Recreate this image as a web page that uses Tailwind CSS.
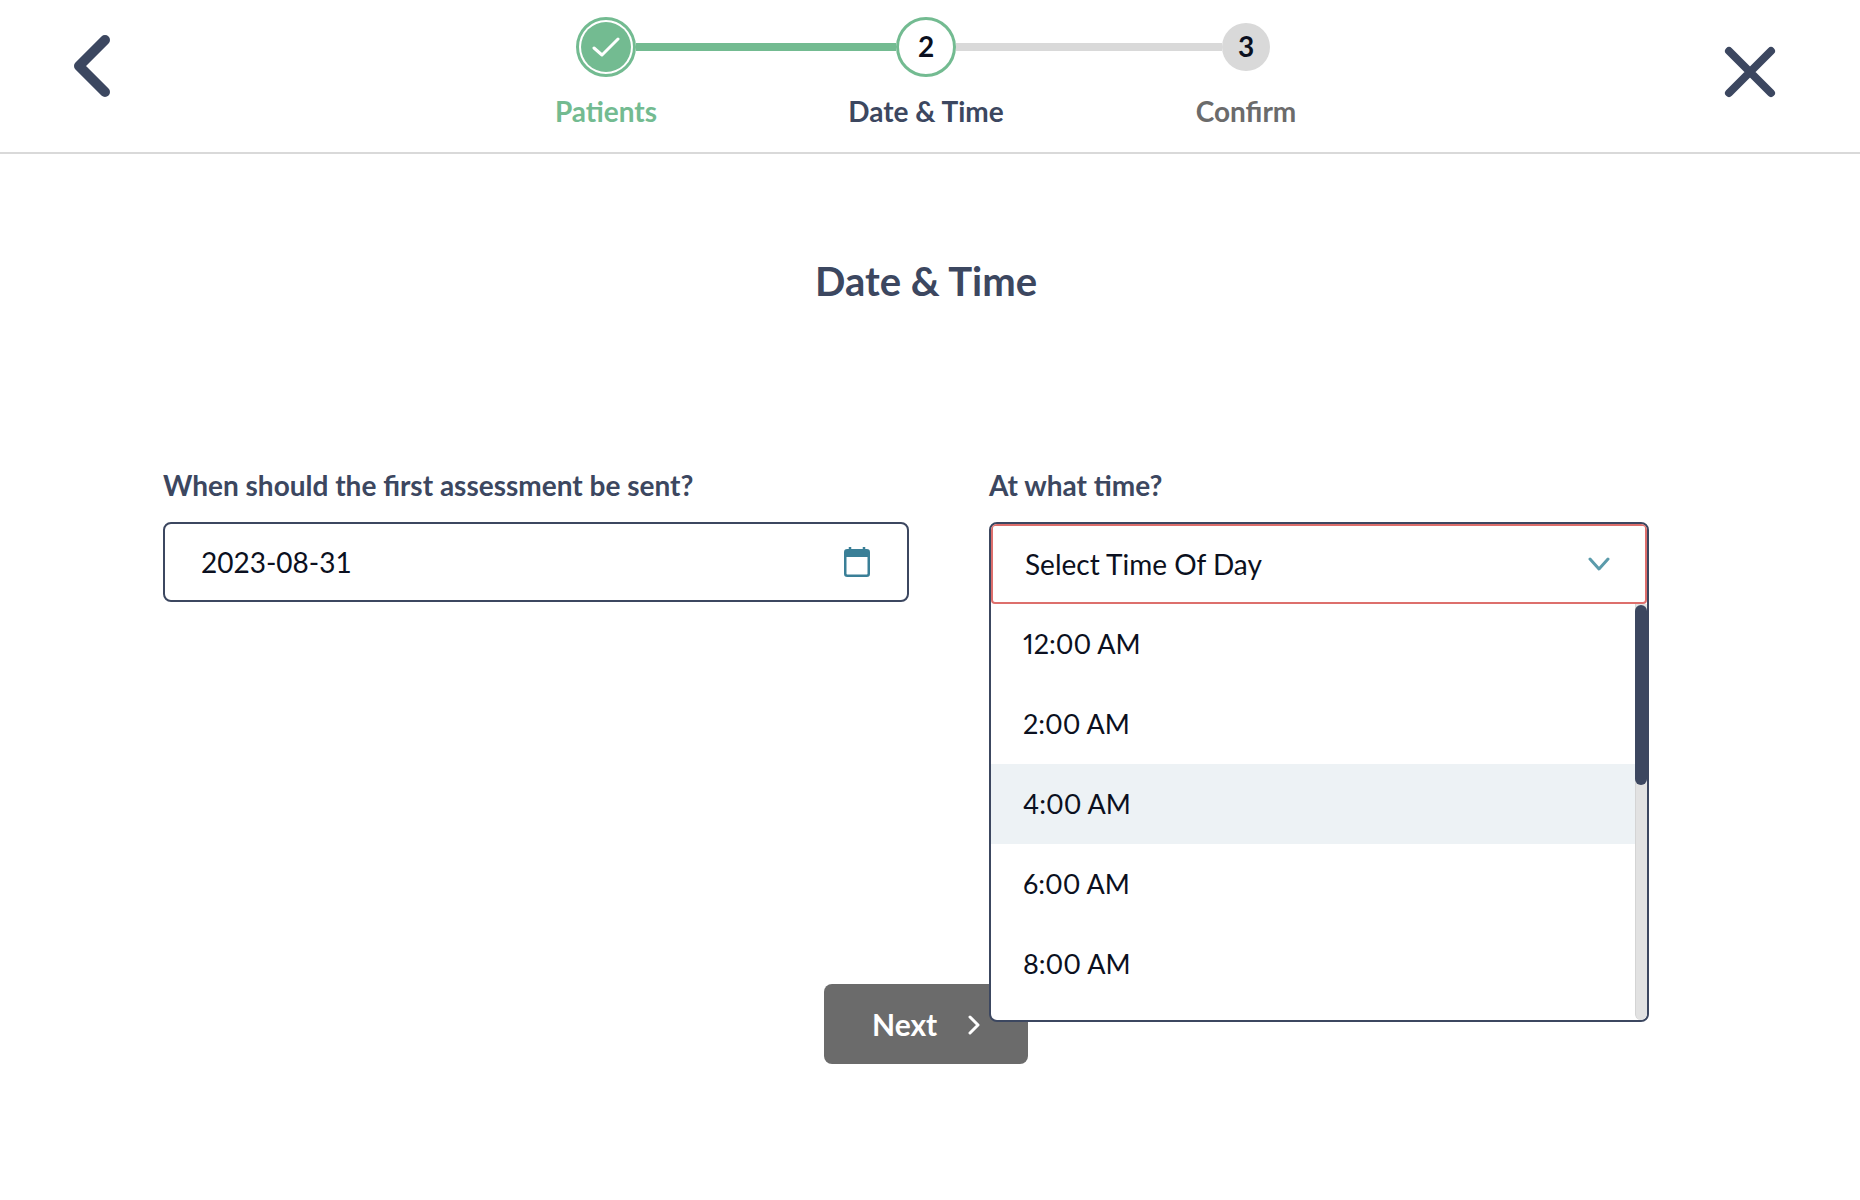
<!doctype html>
<html lang="en">
    <head>
        <meta charset="UTF-8" />
        <title>Date &amp; Time</title>
        <script src="https://cdn.jsdelivr.net/npm/@tailwindcss/browser@4"></script>
    </head>

    <body class="min-h-screen bg-white font-['Lato',sans-serif] text-[#3c4760]">
        <header class="grid h-[154px] grid-cols-[446px_960px_454px] border-b-2 border-[#d9d9d9]">
            <button class="ml-[73px] mt-[35px] self-start">
                <svg width="38" height="62" viewBox="0 0 38 62" fill="none" stroke="#3c4760" stroke-width="10" stroke-linecap="round" stroke-linejoin="round">
                    <path d="M32 5 6 31l26 26"></path>
                </svg>
            </button>

            <div class="flex flex-col pt-[17px]">
                <div class="flex items-center justify-center pr-[6px]">
                    <div class="flex h-[60px] w-[60px] items-center justify-center rounded-full border-[3px] border-[#73bb91]">
                        <div class="flex h-[50px] w-[50px] items-center justify-center rounded-full bg-[#73bb91]">
                            <svg width="28" height="20" viewBox="0 0 28 20" fill="none" stroke="#fff" stroke-width="3" stroke-linecap="round" stroke-linejoin="round">
                                <path d="m2 11 8 7L26 2"></path>
                            </svg>
                        </div>
                    </div>
                    <div class="h-2 w-[260px] bg-[#73bb91]"></div>
                    <div class="flex h-[60px] w-[60px] items-center justify-center rounded-full border-[3px] border-[#73bb91] pb-0.5 text-[28px] font-bold text-[#0b1020]">2</div>
                    <div class="h-2 w-[266px] bg-[#d9d9d9]"></div>
                    <div class="flex h-[48px] w-[48px] items-center justify-center rounded-full bg-[#d9d9d9] pb-0.5 text-[28px] font-bold text-[#0b1020]">3</div>
                </div>
                <div class="mt-[18px] grid grid-cols-3 text-center text-[28px] font-bold leading-8">
                    <span class="text-[#73bb91]">Patients</span>
                    <span>Date &amp; Time</span>
                    <span class="text-[#6b6b6b]">Confirm</span>
                </div>
            </div>

            <button class="ml-[318px] mt-[46px] self-start">
                <svg width="52" height="52" viewBox="0 0 52 52" fill="none" stroke="#3c4760" stroke-width="8" stroke-linecap="round">
                    <path d="M5 5l42 42M47 5 5 47"></path>
                </svg>
            </button>
        </header>

        <main class="w-[1852px] pt-[104px]">
            <h1 class="text-center text-[40px] font-bold leading-[46px]">Date &amp; Time</h1>

            <form class="mt-[165px] grid grid-cols-[746px_660px] gap-x-20 pl-[163px]">
                <div>
                    <label class="block text-[28px] font-bold leading-8">When should the first assessment be sent?</label>
                    <div class="mt-[21px] flex h-20 items-center justify-between rounded-lg border-2 border-[#3c4760] pl-9 pr-[37px] text-[28px] text-[#0b1020]">
                        <span>2023-08-31</span>
                        <svg width="26" height="30" viewBox="0 0 26 30" fill="none">
                            <path d="M6 0v5M20 0v5" stroke="#3a7f97" stroke-width="2.5"></path>
                            <rect x="1.25" y="3.25" width="23.5" height="25.5" rx="2" stroke="#3a7f97" stroke-width="2.5"></rect>
                            <path d="M1 5a2 2 0 0 1 2-2h20a2 2 0 0 1 2 2v5H1z" fill="#3a7f97"></path>
                        </svg>
                    </div>
                </div>
                <div>
                    <label class="block text-[28px] font-bold leading-8">At what time?</label>
                    <div class="relative mt-[21px] h-20">
                        <div class="absolute left-0 right-0 top-0 z-10 flex h-[500px] flex-col overflow-hidden rounded-lg border-2 border-[#3c4760] bg-white text-[28px] text-[#0b1020]">
                            <div class="flex h-20 shrink-0 items-center justify-between rounded-sm border-2 border-[#dd6f6c] pl-8 pr-[35px]">
                                <span>Select Time Of Day</span>
                                <svg width="22" height="14" viewBox="0 0 22 14" fill="none" stroke="#5b9bab" stroke-width="3" stroke-linecap="round" stroke-linejoin="round">
                                    <path d="m2 2 9 10 9-10"></path>
                                </svg>
                            </div>
                            <div class="flex min-h-0 flex-1">
                                <ul class="flex-1 overflow-hidden text-[27px] proportional-nums">
                                    <li class="flex h-20 items-center pl-8">12:00 AM</li>
                                    <li class="flex h-20 items-center pl-8">2:00 AM</li>
                                    <li class="flex h-20 items-center bg-[#edf2f5] pl-8">4:00 AM</li>
                                    <li class="flex h-20 items-center pl-8">6:00 AM</li>
                                    <li class="flex h-20 items-center pl-8">8:00 AM</li>
                                </ul>
                                <div class="w-3 rounded-b-lg border-l border-[#d4d4d4] bg-[#e2e2e2]">
                                    <div class="-ml-px mt-px h-[180px] rounded-md bg-[#3c4760]"></div>
                                </div>
                            </div>
                        </div>
                    </div>
                </div>
            </form>

            <button class="mx-auto mt-[382px] flex h-20 w-[204px] items-center rounded-lg bg-[#6b6b6b] pl-12 text-[30px] font-bold text-white">
                Next
                <svg class="ml-[30px] mt-0.5" width="14" height="20" viewBox="0 0 14 20" fill="none" stroke="#fff" stroke-width="3" stroke-linecap="round" stroke-linejoin="round">
                    <path d="m3 2 8 8-8 8"></path>
                </svg>
            </button>
        </main>
    </body>
</html>
